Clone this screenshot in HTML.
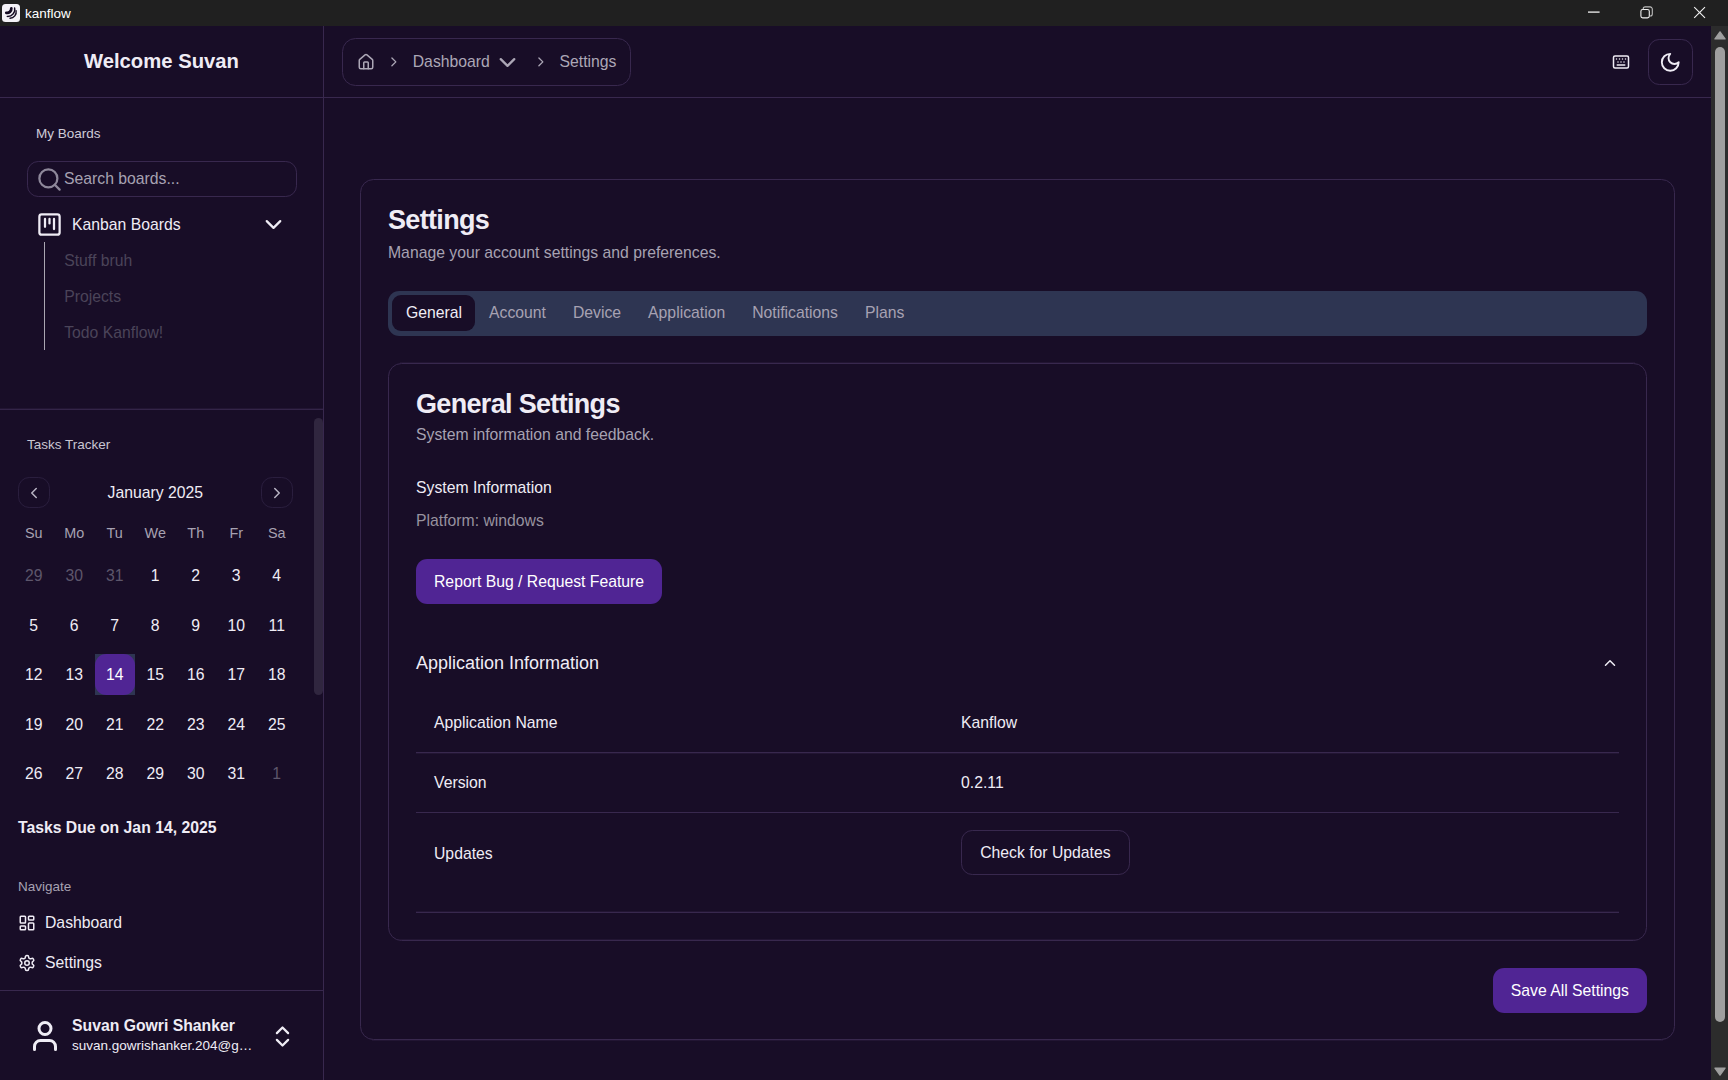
<!DOCTYPE html>
<html lang="en">
<head>
<meta charset="utf-8">
<title>kanflow</title>
<style>
:root{
  --bg:#180d27;
  --bd:#38284e;
  --fg:#efecf5;
  --mut:#a7a2b2;
  --pri:#502594;
  --slate:#2e3552;
}
*{box-sizing:border-box;margin:0;padding:0}
html,body{width:1728px;height:1080px;overflow:hidden;background:var(--bg);}
body{font-family:"Liberation Sans",Arial,sans-serif;color:var(--fg);position:relative}
svg{display:block}
.ic{fill:none;stroke:currentColor;stroke-width:2;stroke-linecap:round;stroke-linejoin:round}

/* ---------- native title bar (device px) ---------- */
#titlebar{position:absolute;left:0;top:0;width:1728px;height:26px;background:#202020;color:#fff;font-size:13.5px;line-height:26px}
#titlebar .logo{position:absolute;left:2px;top:3.5px;width:18px;height:18px}
#titlebar .ttl{position:absolute;left:25px;top:0;height:26px;line-height:27px}
#titlebar .wc{position:absolute;top:0;height:26px}

/* ---------- web view (css px, zoomed 1.125) ---------- */
#wv{position:absolute;left:0;top:26px;width:1728px;height:1054px;overflow:hidden}
#app{position:absolute;left:0;top:0;width:1536px;height:936.889px;zoom:1.125;font-size:14px;line-height:20px;overflow:hidden}
.abs{position:absolute}

/* ---------- sidebar ---------- */
#sb{position:absolute;left:0;top:0;width:288px;height:100%;border-right:1px solid var(--bd)}
#sbh{position:absolute;left:0;top:0;width:287px;height:64px;border-bottom:1px solid var(--bd);display:flex;align-items:center;justify-content:center;font-size:18px;font-weight:700;line-height:28px}
.lbl{position:absolute;height:32px;display:flex;align-items:center;font-size:12px;line-height:16px;color:#cfcbd8}
#search{position:absolute;left:24px;top:120px;width:240px;height:32px;border:1px solid var(--bd);border-radius:10px;display:flex;align-items:center;padding-left:7px;color:var(--mut)}
#search svg{width:24px;height:24px;color:#8e889a;flex:none}
#search span{margin-left:1px;font-size:14px;position:relative;top:0.6px}
#kb{position:absolute;left:24px;top:160px;width:240px;height:32px;display:flex;align-items:center;padding:0 8px;gap:8px}
#kb svg{width:24px;height:24px;flex:none}
#kb span{flex:1;position:relative;top:0.7px}
#sub{position:absolute;left:39.2px;top:192px;height:96px;border-left:1px solid #aaa6b2;padding:2.5px 0 1.5px 17px;color:#4b4459}
#sub div{height:28px;line-height:28px;margin-bottom:4px;white-space:nowrap}
#sep1{position:absolute;left:0;top:339.9px;width:287px;height:0.89px;background:#221533}
#sep2{position:absolute;left:0;top:340.8px;width:287px;height:0.89px;background:#332448}
#thumb{position:absolute;left:279.2px;top:348.4px;width:8px;height:246.4px;border-radius:4px;background:#30263f}
/* calendar */
#cal{position:absolute;left:12px;top:388.6px;width:252px}
.navb{position:absolute;top:12.2px;width:28px;height:28px;border:1px solid #2a1e3e;border-radius:10px;display:flex;align-items:center;justify-content:center;color:#b9b4c4}
.navb svg{width:16px;height:16px}
#mon{position:absolute;left:0;top:16.9px;width:252px;text-align:center;font-size:14px;line-height:20px}
.row{position:absolute;left:0;width:252px;display:flex}
.row span{width:36px;height:36px;line-height:37px;text-align:center;font-size:14px;flex:none}
.row.hd span{font-size:12.8px;height:19.2px;line-height:19.2px;color:var(--mut)}
.row .out{color:#5d566b}
.row .sel{background:var(--slate);position:relative}
.row .sel b{position:absolute;inset:0;background:var(--pri);border-radius:10px;font-weight:400;color:#fff}
#due{position:absolute;left:16px;top:703.5px;font-weight:700;font-size:14px;line-height:20px;white-space:nowrap}
.nav{position:absolute;left:8px;width:272px;height:32px;display:flex;align-items:center;gap:8px;padding:0 8px}
.nav svg{width:16px;height:16px;flex:none}
#sbf{position:absolute;left:0;top:857px;width:287px;height:80px;border-top:1px solid var(--bd)}
#sbf .av{position:absolute;left:24px;top:23.5px;width:32px;height:32px}
#sbf .nm{position:absolute;left:64px;top:22.2px;font-size:14px;font-weight:700;line-height:17.5px;white-space:nowrap}
#sbf .em{position:absolute;left:64px;top:41.3px;font-size:12px;line-height:15px;white-space:nowrap}
#sbf .ud{position:absolute;left:239.4px;top:28.4px;width:24px;height:24px}

/* ---------- main ---------- */
#main{position:absolute;left:288px;top:0;width:1232.89px;height:100%}
#hd{position:absolute;left:0;top:0;width:100%;height:64px;border-bottom:1px solid var(--bd)}
#bc{position:absolute;left:16px;top:11px;height:42px;border:1px solid var(--bd);border-radius:12px;padding:0 12px;display:flex;align-items:center;gap:10px;color:#aca7b6;font-size:14px;white-space:nowrap}
#bc .h{width:16px;height:16px}
#bc .s{width:14px;height:14px}
#bc .d{width:24px;height:24px;margin-left:-6px}
#kbd{position:absolute;left:1144.8px;top:23.9px;width:16px;height:16px}
#moon{position:absolute;left:1176.9px;top:11.9px;width:40px;height:40.5px;border:1px solid var(--bd);border-radius:10px;display:flex;align-items:center;justify-content:center}
#moon svg{width:20px;height:20px}
#card{position:absolute;left:32px;top:136px;width:1168.89px;height:765.3px;border:1px solid var(--bd);border-radius:12px}
.ct{font-size:24px;font-weight:700;line-height:24px;letter-spacing:-0.6px;white-space:nowrap}
.cd{font-size:14px;line-height:20px;color:var(--mut);margin-top:6px;white-space:nowrap}
#card>.hdr{position:absolute;left:24px;top:24px}
#tabs{position:absolute;left:24px;top:98.6px;width:1118.89px;height:40px;background:var(--slate);border-radius:10px;padding:4px;display:flex;color:var(--mut);font-size:14px}
#tabs span{height:32px;line-height:32px;padding:0 12px;border-radius:8px;white-space:nowrap}
#tabs .on{background:var(--bg);color:var(--fg);margin:0 0.8px 0 -0.8px;padding:0 11.2px 0 12.8px}
#inner{position:absolute;left:24px;top:162.6px;width:1118.89px;height:513.7px;border:1px solid var(--bd);border-radius:12px}
#inner:before{content:"";position:absolute;left:10px;right:10px;top:-1.85px;height:0.89px;background:#221533}
#inner:after{content:"";position:absolute;left:10px;right:10px;bottom:0;height:0.89px;background:#221533}
#card:after{content:"";position:absolute;left:10px;right:10px;bottom:-1.85px;height:0.89px;background:#221533}
.hr.fa:before{content:"";position:absolute;left:0;right:0;top:-0.89px;height:0.89px;background:#221533}
.hr.fb:after{content:"";position:absolute;left:0;right:0;top:0.89px;height:0.89px;background:#221533}
#inner>.hdr{position:absolute;left:24px;top:24px}
.a{position:absolute;white-space:nowrap}
.btn{position:absolute;height:40px;line-height:40px;padding:0 16px;border-radius:10px;background:var(--pri);color:#fff;font-size:14px;white-space:nowrap}
.btn.ol{background:transparent;border:1px solid var(--bd);line-height:38px;color:var(--fg)}
.hr{position:absolute;left:24px;width:1068.89px;height:1px;background:var(--bd)}
/* page scrollbar (device px) */
#vsb{position:absolute;left:1711px;top:26px;width:17px;height:1054px;background:#2c2c2c}
#vsb i{position:absolute;left:3.5px;top:20.6px;width:10px;height:975.6px;border-radius:5px;background:#9f9f9f}
#vsb svg{position:absolute;left:2.5px;width:12px;height:9px}
</style>
</head>
<body>
<div id="titlebar">
  <svg class="logo" viewBox="0 0 18 18"><rect x="0" y="0" width="18" height="18" rx="3.5" fill="#f4f2f8"/><g fill="none" stroke="#140a22" stroke-linecap="round"><path d="M9.3 4.4A4.2 4.2 0 0 1 4.3 8.8" stroke-width="2.8"/><path d="M12.6 3.9A7 7 0 0 1 5.2 12.4" stroke-width="1.4"/><path d="M14.1 6.6A6.5 6.5 0 0 1 8 14.3" stroke-width="1.4"/></g></svg>
  <span class="ttl">kanflow</span>
  <svg class="wc" style="left:1576px;width:152px" viewBox="0 0 152 26" fill="none" stroke="#f2f2f2" stroke-width="1.1"><path d="M12 12.1h11.6" stroke-width="1.3"/><rect x="64.9" y="9.5" width="8.4" height="8.4" rx="1.8"/><path d="M67.2 9.3V8.9a2 2 0 0 1 2-2h4.9a2.2 2.2 0 0 1 2.2 2.2v4.9a2 2 0 0 1-2 2h-.6" stroke="#bdbdbd"/><path d="M118.2 7.1l10.8 10.8M129 7.1l-10.8 10.8"/></svg>
</div>
<div id="wv"><div id="app">

<div id="sb">
  <div id="sbh">Welcome Suvan</div>
  <div class="lbl" style="left:32px;top:80px">My Boards</div>
  <div id="search"><svg class="ic" viewBox="0 0 24 24"><circle cx="11" cy="11" r="8"/><path d="m21 21-4.3-4.3"/></svg><span>Search boards...</span></div>
  <div id="kb"><svg class="ic" viewBox="0 0 24 24"><rect width="18" height="18" x="3" y="3" rx="2"/><path d="M8 7v7"/><path d="M12 7v4"/><path d="M16 7v9"/></svg><span>Kanban Boards</span><svg class="ic" viewBox="0 0 24 24" style="position:relative;top:0.2px;left:-0.8px"><path d="m6 9 6 6 6-6"/></svg></div>
  <div id="sub"><div>Stuff bruh</div><div>Projects</div><div>Todo Kanflow!</div></div>
  <div id="sep1"></div><div id="sep2"></div>
  <div id="thumb"></div>
  <div class="lbl" style="left:24px;top:356.6px;color:#c9c5d2">Tasks Tracker</div>
  <div id="cal">
    <div class="navb" style="left:4px"><svg class="ic" viewBox="0 0 24 24"><path d="m15 18-6-6 6-6"/></svg></div>
    <div class="navb" style="right:4px"><svg class="ic" viewBox="0 0 24 24"><path d="m9 18 6-6-6-6"/></svg></div>
    <div id="mon">January 2025</div>
    <div class="row hd" style="top:52.9px"><span>Su</span><span>Mo</span><span>Tu</span><span>We</span><span>Th</span><span>Fr</span><span>Sa</span></div>
    <div class="row" style="top:81.8px"><span class="out">29</span><span class="out">30</span><span class="out">31</span><span>1</span><span>2</span><span>3</span><span>4</span></div>
    <div class="row" style="top:125.8px"><span>5</span><span>6</span><span>7</span><span>8</span><span>9</span><span>10</span><span>11</span></div>
    <div class="row" style="top:169.8px"><span>12</span><span>13</span><span class="sel"><b>14</b></span><span>15</span><span>16</span><span>17</span><span>18</span></div>
    <div class="row" style="top:213.8px"><span>19</span><span>20</span><span>21</span><span>22</span><span>23</span><span>24</span><span>25</span></div>
    <div class="row" style="top:257.8px"><span>26</span><span>27</span><span>28</span><span>29</span><span>30</span><span>31</span><span class="out">1</span></div>
  </div>
  <div id="due">Tasks Due on Jan 14, 2025</div>
  <div class="lbl" style="left:16px;top:749px;color:var(--mut)">Navigate</div>
  <div class="nav" style="top:781px"><svg class="ic" viewBox="0 0 24 24"><rect width="7" height="9" x="3" y="3" rx="1"/><rect width="7" height="5" x="14" y="3" rx="1"/><rect width="7" height="9" x="14" y="12" rx="1"/><rect width="7" height="5" x="3" y="16" rx="1"/></svg><span style="position:relative;top:0.9px">Dashboard</span></div>
  <div class="nav" style="top:817px"><svg class="ic" viewBox="0 0 24 24"><path d="M12.22 2h-.44a2 2 0 0 0-2 2v.18a2 2 0 0 1-1 1.73l-.43.25a2 2 0 0 1-2 0l-.15-.08a2 2 0 0 0-2.73.73l-.22.38a2 2 0 0 0 .73 2.73l.15.1a2 2 0 0 1 1 1.72v.51a2 2 0 0 1-1 1.74l-.15.09a2 2 0 0 0-.73 2.73l.22.38a2 2 0 0 0 2.73.73l.15-.08a2 2 0 0 1 2 0l.43.25a2 2 0 0 1 1 1.73V20a2 2 0 0 0 2 2h.44a2 2 0 0 0 2-2v-.18a2 2 0 0 1 1-1.73l.43-.25a2 2 0 0 1 2 0l.15.08a2 2 0 0 0 2.73-.73l.22-.39a2 2 0 0 0-.73-2.73l-.15-.08a2 2 0 0 1-1-1.74v-.5a2 2 0 0 1 1-1.74l.15-.09a2 2 0 0 0 .73-2.73l-.22-.38a2 2 0 0 0-2.73-.73l-.15.08a2 2 0 0 1-2 0l-.43-.25a2 2 0 0 1-1-1.73V4a2 2 0 0 0-2-2z"/><circle cx="12" cy="12" r="3"/></svg><span>Settings</span></div>
  <div id="sbf">
    <svg class="ic av" viewBox="0 0 24 24"><path d="M19 21v-2a4 4 0 0 0-4-4H9a4 4 0 0 0-4 4v2"/><circle cx="12" cy="7" r="4"/></svg>
    <div class="nm">Suvan Gowri Shanker</div>
    <div class="em">suvan.gowrishanker.204@g…</div>
    <svg class="ic ud" viewBox="0 0 24 24"><path d="m7 15 5 5 5-5"/><path d="m7 9 5-5 5 5"/></svg>
  </div>
</div>

<div id="main">
  <div id="hd">
    <div id="bc">
      <svg class="ic h" viewBox="0 0 24 24"><path d="M15 21v-8a1 1 0 0 0-1-1h-4a1 1 0 0 0-1 1v8"/><path d="M3 10a2 2 0 0 1 .709-1.528l7-5.999a2 2 0 0 1 2.582 0l7 5.999A2 2 0 0 1 21 10v9a2 2 0 0 1-2 2H5a2 2 0 0 1-2-2z"/></svg>
      <svg class="ic s" viewBox="0 0 24 24"><path d="m9 18 6-6-6-6"/></svg>
      <span>Dashboard</span>
      <svg class="ic d" viewBox="0 0 24 24"><path d="m6 9 6 6 6-6"/></svg>
      <svg class="ic s" viewBox="0 0 24 24"><path d="m9 18 6-6-6-6"/></svg>
      <span>Settings</span>
    </div>
    <svg id="kbd" class="ic" viewBox="0 0 24 24"><path d="M10 8h.01"/><path d="M12 12h.01"/><path d="M14 8h.01"/><path d="M16 12h.01"/><path d="M18 8h.01"/><path d="M6 8h.01"/><path d="M7 16h10"/><path d="M8 12h.01"/><rect width="20" height="16" x="2" y="4" rx="2"/></svg>
    <div id="moon"><svg class="ic" viewBox="0 0 24 24"><path d="M12 3a6 6 0 0 0 9 9 9 9 0 1 1-9-9Z"/></svg></div>
  </div>
  <div id="card">
    <div class="hdr"><div class="ct">Settings</div><div class="cd" style="margin-top:6.9px">Manage your account settings and preferences.</div></div>
    <div id="tabs"><span class="on">General</span><span>Account</span><span>Device</span><span>Application</span><span>Notifications</span><span>Plans</span></div>
    <div id="inner">
      <div class="hdr"><div class="ct">General Settings</div><div class="cd" style="margin-top:5px">System information and feedback.</div></div>
      <div class="a" style="left:24px;top:100.5px;font-size:14px;line-height:20px">System Information</div>
      <div class="a" style="left:24px;top:129.9px;font-size:14px;line-height:20px;color:#97929f">Platform: windows</div>
      <div class="btn" style="left:24px;top:173.4px">Report Bug / Request Feature</div>
      <div class="a" style="left:24px;top:254px;font-size:16px;line-height:24px">Application Information</div>
      <svg class="ic a" viewBox="0 0 24 24" style="left:1077.4px;top:258px;width:16px;height:16px"><path d="m18 15-6-6-6 6"/></svg>
      <div class="a" style="left:40px;top:309.5px">Application Name</div><div class="a" style="left:508.5px;top:309.5px">Kanflow</div>
      <div class="hr fb" style="top:345.2px"></div>
      <div class="a" style="left:40px;top:362.5px">Version</div><div class="a" style="left:508.5px;top:362.5px">0.2.11</div>
      <div class="hr" style="top:398.2px"></div>
      <div class="a" style="left:40px;top:425.7px">Updates</div><div class="btn ol" style="left:508.2px;top:414.7px;padding:0 16.4px;line-height:39px">Check for Updates</div>
      <div class="hr fa" style="top:487.2px"></div>
    </div>
    <div class="btn" style="right:24px;top:700px">Save All Settings</div>
  </div>
</div>

</div></div>

<div id="vsb"><svg viewBox="0 0 12 9" style="top:5.2px"><path d="M6 0.9 L11 7.9 H1 Z" fill="#9f9f9f" stroke="#9f9f9f" stroke-width="1.4" stroke-linejoin="round"/></svg><i></i><svg viewBox="0 0 12 9" style="top:1041.4px"><path d="M6 8.1 L11 1.1 H1 Z" fill="#9f9f9f" stroke="#9f9f9f" stroke-width="1.4" stroke-linejoin="round"/></svg></div>
</body>
</html>
